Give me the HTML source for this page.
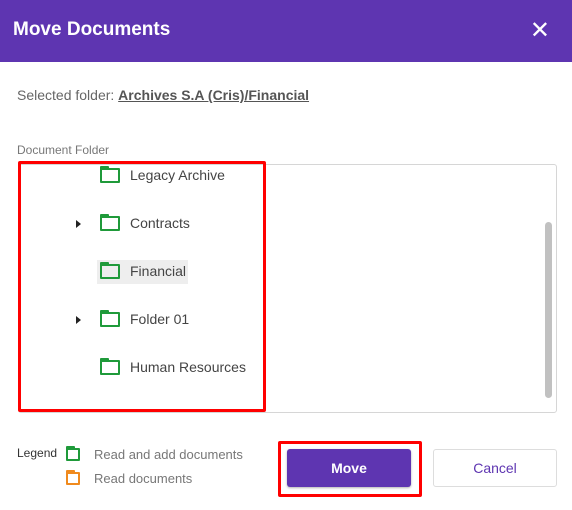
<!DOCTYPE html>
<html><head><style>
*{box-sizing:border-box;margin:0;padding:0}
body{width:572px;height:510px;background:#fff;font-family:"Liberation Sans",sans-serif;position:relative;overflow:hidden;color:#555}
.hdr{position:absolute;left:0;top:0;width:572px;height:62px;background:#5e35b1;color:#fff;font-weight:bold;font-size:19px;padding:19px 0 0 13px}
.x{position:absolute;right:22px;top:16px;font-size:24px;font-weight:normal;color:#fff}
.a{position:absolute;font-size:14px;white-space:nowrap}
.box{position:absolute;left:18px;top:164px;width:539px;height:249px;border:1px solid #d6d6d6;border-radius:3px}
.sb{position:absolute;left:545px;top:222px;width:7px;height:176px;background:#c1c1c1;border-radius:4px}
.red{position:absolute;border:3px solid #f00;border-radius:2px}
.f{position:absolute;width:20px;height:15px;border:2px solid #1f9a3a;border-radius:1px}
.f:before{content:"";position:absolute;left:-2px;top:-4px;width:9px;height:3px;background:#1f9a3a;border-radius:1px 1px 0 0}
.o{border-color:#f08a1d}.o:before{background:#f08a1d}
.tri{position:absolute;width:0;height:0;border-left:5px solid #222;border-top:4px solid transparent;border-bottom:4px solid transparent}
.t{position:absolute;font-size:14px;color:#444}
</style></head><body>
<div class="hdr">Move Documents<span class="x">✕</span></div>
<div class="a" style="left:17px;top:87px;font-size:14px;color:#666">Selected folder: <u style="color:#555;font-weight:bold">Archives S.A (Cris)/Financial</u></div>
<div class="a" style="left:17px;top:143px;font-size:12px;color:#777">Document Folder</div>
<div class="box"></div>
<div class="sb"></div>
<div style="position:absolute;left:97px;top:260px;width:91px;height:24px;background:#eee"></div>
<div class="f" style="left:100px;top:168px"></div><div class="t" style="left:130px;top:167px">Legacy Archive</div>
<div class="tri" style="left:76px;top:220px"></div>
<div class="f" style="left:100px;top:216px"></div><div class="t" style="left:130px;top:215px">Contracts</div>
<div class="f" style="left:100px;top:264px"></div><div class="t" style="left:130px;top:263px">Financial</div>
<div class="tri" style="left:76px;top:316px"></div>
<div class="f" style="left:100px;top:312px"></div><div class="t" style="left:130px;top:311px">Folder 01</div>
<div class="f" style="left:100px;top:360px"></div><div class="t" style="left:130px;top:359px">Human Resources</div>
<div class="red" style="left:18px;top:161px;width:248px;height:251px"></div>
<div class="a" style="left:17px;top:446px;font-size:12px;color:#333">Legend</div>
<div class="f" style="left:66px;top:448px;width:14px;height:13px"></div>
<div class="a" style="left:94px;top:447px;font-size:13px;color:#777">Read and add documents</div>
<div class="f o" style="left:66px;top:472px;width:14px;height:13px"></div>
<div class="a" style="left:94px;top:471px;font-size:13px;color:#777">Read documents</div>
<div class="red" style="left:278px;top:441px;width:144px;height:56px"></div>
<div style="position:absolute;left:287px;top:449px;width:124px;height:38px;background:#5e35b1;border-radius:3px;color:#fff;font-weight:bold;font-size:14px;text-align:center;line-height:38px;box-shadow:0 1px 2px rgba(0,0,0,.3)">Move</div>
<div style="position:absolute;left:433px;top:449px;width:124px;height:38px;border:1px solid #ddd;border-radius:3px;color:#5e35b1;font-size:14px;text-align:center;line-height:36px">Cancel</div>
</body></html>
